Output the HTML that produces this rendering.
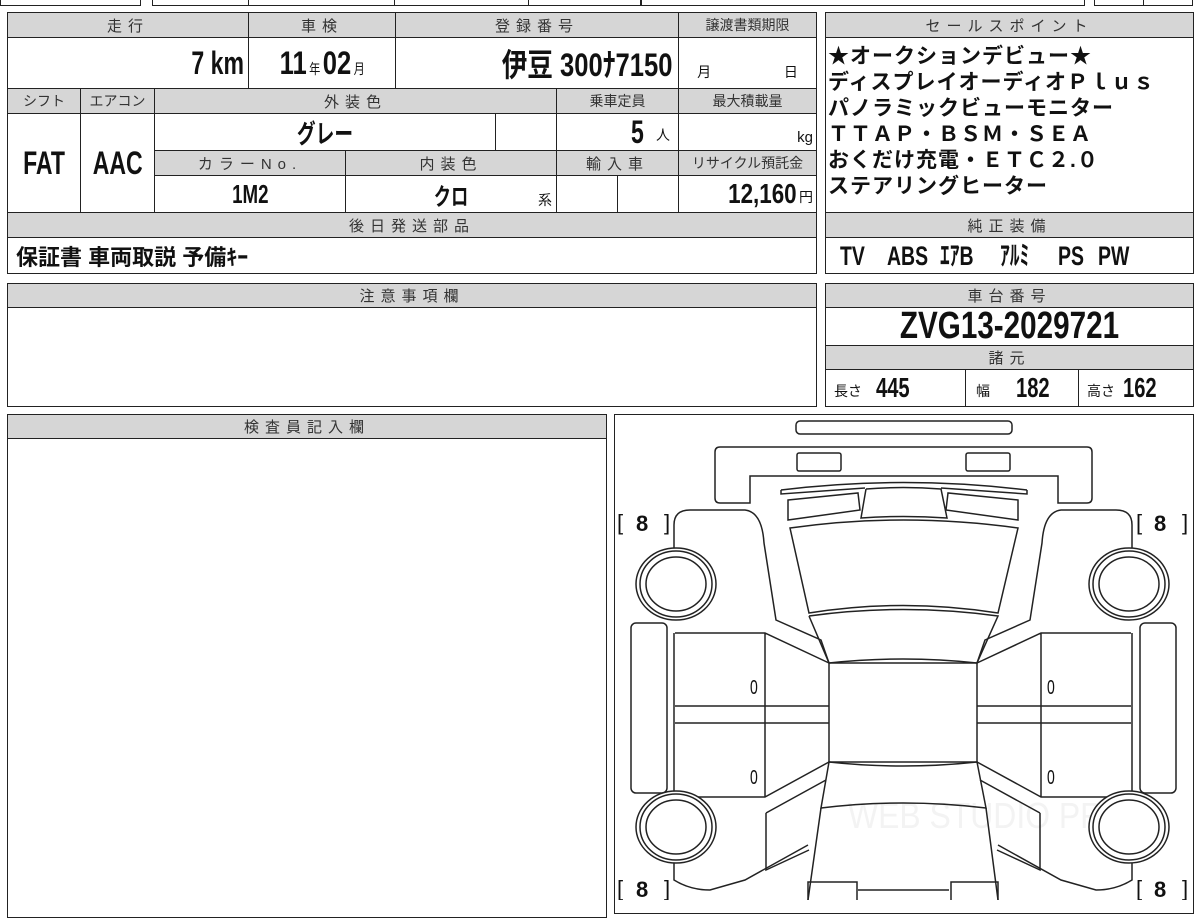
<!DOCTYPE html>
<html><head><meta charset="utf-8"><style>
*{margin:0;padding:0;box-sizing:border-box}
body{width:1200px;height:900px;background:#fff;position:relative;overflow:hidden;font-family:"Liberation Sans","Noto Sans CJK JP",sans-serif;color:#111}
.c{position:absolute;border:1.5px solid #222;display:flex;align-items:center;justify-content:center;white-space:nowrap;overflow:hidden}
.h{background:#d6d6d6;font-size:15px;color:#333;letter-spacing:6px}
.hs{letter-spacing:0;font-size:14px}
.b{font-weight:bold;font-size:32px;color:#111}
.n{display:inline-block;transform:scaleX(.72)}
.r{transform-origin:right center}
.l{transform-origin:left center}
.sm{font-size:14px;font-weight:normal}
.t{position:absolute;white-space:nowrap}
</style></head><body>
<!-- top partial -->
<div style="position:absolute;left:0;top:-10px;width:141px;height:16px;border:1.5px solid #222"></div>
<div style="position:absolute;left:152px;top:-10px;width:489px;height:16px;border:1.5px solid #222"></div>
<div style="position:absolute;left:248px;top:-10px;width:147px;height:16px;border-left:1.5px solid #222;border-right:1.5px solid #222"></div>
<div style="position:absolute;left:528px;top:-10px;width:1px;height:16px;border-left:1.5px solid #222"></div>
<div style="position:absolute;left:641px;top:-10px;width:444px;height:16px;border:1.5px solid #222"></div>
<div style="position:absolute;left:1094px;top:-10px;width:99px;height:16px;border:1.5px solid #222"></div>
<div style="position:absolute;left:1143px;top:-10px;width:1px;height:16px;border-left:1.5px solid #222"></div>

<!-- main left table -->
<div class="c h" style="left:7px;top:12px;width:242px;height:26px">走行</div>
<div class="c h" style="left:248px;top:12px;width:148px;height:26px">車検</div>
<div class="c h" style="left:395px;top:12px;width:284px;height:26px">登録番号</div>
<div class="c h hs" style="left:678px;top:12px;width:139px;height:26px">譲渡書類期限</div>

<div class="c b" style="left:7px;top:37px;width:242px;height:52px;justify-content:flex-end;padding-right:4px"><span class="n r">7 km</span></div>
<div class="c b" style="left:248px;top:37px;width:148px;height:52px"><span class="n" style="transform:scaleX(.8)">11<span class="sm" style="margin:0 3px">年</span>02<span class="sm" style="margin-left:3px">月</span></span></div>
<div class="c b" style="left:395px;top:37px;width:284px;height:52px;justify-content:flex-end;padding-right:6px"><span class="n r" style="transform:scaleX(.8)">伊豆 300ﾅ7150</span></div>
<div class="c" style="left:678px;top:37px;width:139px;height:52px;font-size:14px;align-items:flex-end;padding-bottom:6px;justify-content:space-around">月<span></span>日</div>

<div class="c h hs" style="left:7px;top:88px;width:74px;height:26px">シフト</div>
<div class="c h hs" style="left:80px;top:88px;width:75px;height:26px">エアコン</div>
<div class="c h" style="left:154px;top:88px;width:403px;height:26px">外装色</div>
<div class="c h hs" style="left:556px;top:88px;width:123px;height:26px">乗車定員</div>
<div class="c h hs" style="left:678px;top:88px;width:139px;height:26px">最大積載量</div>

<div class="c b" style="left:7px;top:113px;width:74px;height:100px"><span class="n">FAT</span></div>
<div class="c b" style="left:80px;top:113px;width:75px;height:100px"><span class="n">AAC</span></div>
<div class="c b" style="left:154px;top:113px;width:342px;height:38px;font-size:26px"><span class="n">グレー</span></div>
<div class="c" style="left:495px;top:113px;width:62px;height:38px"></div>
<div class="c b" style="left:556px;top:113px;width:123px;height:38px;justify-content:flex-end;padding-right:8px"><span class="n r">5</span><span class="sm" style="margin:6px 0 0 12px">人</span></div>
<div class="c" style="left:678px;top:113px;width:139px;height:38px;justify-content:flex-end;padding-right:3px;font-size:15px;align-items:flex-end;padding-bottom:4px">kg</div>

<div class="c h" style="left:154px;top:150px;width:192px;height:26px">カラーNo.</div>
<div class="c h" style="left:345px;top:150px;width:212px;height:26px">内装色</div>
<div class="c h" style="left:556px;top:150px;width:123px;height:26px">輸入車</div>
<div class="c h hs" style="left:678px;top:150px;width:139px;height:26px">リサイクル預託金</div>

<div class="c b" style="left:154px;top:175px;width:192px;height:38px;font-size:26px"><span class="n">1M2</span></div>
<div class="c b" style="left:345px;top:175px;width:212px;height:38px;font-size:24px"><span class="n">クロ</span><span class="sm" style="position:absolute;right:4px;top:14px">系</span></div>
<div class="c" style="left:556px;top:175px;width:62px;height:38px"></div>
<div class="c" style="left:617px;top:175px;width:62px;height:38px"></div>
<div class="c b" style="left:678px;top:175px;width:139px;height:38px;font-size:28px;justify-content:flex-end;padding-right:3px"><span class="n r" style="transform:scaleX(.8)">12,160</span><span class="sm" style="margin:6px 0 0 2px">円</span></div>

<div class="c h" style="left:7px;top:212px;width:810px;height:26px">後日発送部品</div>
<div class="c" style="left:7px;top:237px;width:810px;height:37px;justify-content:flex-start;padding-left:8px;font-size:22px;font-weight:bold">保証書 車両取説 予備ｷｰ</div>

<!-- 注意事項欄 -->
<div class="c h" style="left:7px;top:283px;width:810px;height:25px">注意事項欄</div>
<div class="c" style="left:7px;top:307px;width:810px;height:100px"></div>

<!-- 検査員記入欄 -->
<div class="c h" style="left:7px;top:414px;width:600px;height:25px">検査員記入欄</div>
<div class="c" style="left:7px;top:438px;width:600px;height:480px"></div>

<!-- right column -->
<div class="c h" style="left:825px;top:12px;width:369px;height:26px">セールスポイント</div>
<div class="c" style="left:825px;top:37px;width:369px;height:176px;display:block;padding:6px 0 0 2px;font-size:21px;font-weight:bold;line-height:26px;letter-spacing:1px">
★オークションデビュー★<br>ディスプレイオーディオＰｌｕｓ<br>パノラミックビューモニター<br>ＴＴＡＰ・ＢＳＭ・ＳＥＡ<br>おくだけ充電・ＥＴＣ２.０<br>ステアリングヒーター</div>
<div class="c h" style="left:825px;top:212px;width:369px;height:26px">純正装備</div>
<div class="c" style="left:825px;top:237px;width:369px;height:37px"></div>
<div style="position:absolute;left:0;top:238px;font-weight:bold;font-size:27px;line-height:36px">
<span class="t n l" style="left:840px">TV</span>
<span class="t n l" style="left:887px">ABS</span>
<span class="t n l" style="left:940px">ｴｱB</span>
<span class="t n l" style="left:1000px">ｱﾙﾐ</span>
<span class="t n l" style="left:1058px">PS</span>
<span class="t n l" style="left:1098px">PW</span>
</div>

<div class="c h" style="left:825px;top:283px;width:369px;height:25px">車台番号</div>
<div class="c b" style="left:825px;top:307px;width:369px;height:39px;font-size:38px"><span class="n" style="transform:scaleX(.78)">ZVG13-2029721</span></div>
<div class="c h" style="left:825px;top:345px;width:369px;height:25px">諸元</div>
<div class="c b" style="left:825px;top:369px;width:141px;height:38px;justify-content:flex-start;padding-left:8px;font-size:28px"><span class="sm" style="margin:6px 14px 0 0">長さ</span><span class="n l">445</span></div>
<div class="c b" style="left:965px;top:369px;width:114px;height:38px;justify-content:flex-start;padding-left:10px;font-size:28px"><span class="sm" style="margin:6px 26px 0 0">幅</span><span class="n l">182</span></div>
<div class="c b" style="left:1078px;top:369px;width:116px;height:38px;justify-content:flex-start;padding-left:8px;font-size:28px"><span class="sm" style="margin:6px 8px 0 0">高さ</span><span class="n l">162</span></div>

<!-- diagram -->
<div class="c" style="left:614px;top:414px;width:580px;height:500px"></div>
<svg style="position:absolute;left:0;top:0" width="1200" height="900" fill="none" stroke="#222" stroke-width="1.5">
<text x="848" y="828" fill="#f3f3f3" stroke="none" font-family="Liberation Sans, sans-serif" font-size="36" textLength="280" lengthAdjust="spacingAndGlyphs">WEB STUDIO PRO</text>
<rect x="796" y="421" width="216" height="13" rx="4"/>
<path d="M750,503 L720,503 Q715,503 715,498 L715,452 Q715,447 720,447 L1087,447 Q1092,447 1092,452 L1092,498 Q1092,503 1087,503 L1058,503 L1058,476 L750,476 Z"/>
<rect x="797" y="453" width="44" height="18" rx="2"/>
<rect x="966" y="453" width="44" height="18" rx="2"/>
<path d="M781,490 Q903,475 1027,490"/>
<path d="M781,490 L781,494 L865,488"/>
<path d="M1027,490 L1027,494 L941,488"/>
<path d="M788,500 L858,493 L860,510 L788,520 Z"/>
<path d="M1018,500 L948,493 L946,510 L1018,520 Z"/>
<path d="M866,489 L861,518 Q903,515 947,518 L941,489 Q903,486 866,489"/>
<path d="M790,528 Q903,512 1018,528 L998,613 Q903,598 809,613 Z"/>
<path d="M809,616 L829,663 Q903,655 977,663 L998,616 Q903,603 809,616"/>
<rect x="829" y="663" width="148" height="99"/>
<path d="M829,762 Q903,770 977,762 L986,808 Q903,798 821,808 Z"/>
<path d="M821,808 L808,900 M986,808 L998,900"/>
<path d="M674,548 L674,525 Q674,510 690,510 L745,510 Q762,512 764,543 L776,620 L821,640 L829,663"/>
<path d="M674,633 L674,797 M674,860 L674,880 Q690,890 710,890 L745,880 L808,845"/>
<path d="M675,633 L765,633 L829,663 M765,633 L765,797 M675,797 L765,797 L829,762 M675,706 L829,706 M675,723 L829,723"/>
<path d="M766,813 L766,870 L809,850 M766,813 L826,780"/>
<rect x="631" y="623" width="36" height="170" rx="5"/>
<path d="M1132,548 L1132,525 Q1132,510 1116,510 L1061,510 Q1044,512 1042,543 L1030,620 L985,640 L977,663"/>
<path d="M1132,633 L1132,797 M1132,860 L1132,880 Q1116,890 1096,890 L1061,880 L998,845"/>
<path d="M1131,633 L1041,633 L977,663 M1041,633 L1041,797 M1131,797 L1041,797 L977,762 M1131,706 L977,706 M1131,723 L977,723"/>
<path d="M1040,813 L1040,870 L997,850 M1040,813 L980,780"/>
<rect x="1140" y="623" width="36" height="170" rx="5"/>
<g fill="#fff">
<ellipse cx="676" cy="584" rx="40" ry="36"/><ellipse cx="676" cy="584" rx="36" ry="33"/><ellipse cx="676" cy="584" rx="30" ry="27"/>
<ellipse cx="676" cy="827" rx="40" ry="36"/><ellipse cx="676" cy="827" rx="36" ry="33"/><ellipse cx="676" cy="827" rx="30" ry="27"/>
<ellipse cx="1129" cy="584" rx="40" ry="36"/><ellipse cx="1129" cy="584" rx="36" ry="33"/><ellipse cx="1129" cy="584" rx="30" ry="27"/>
<ellipse cx="1129" cy="827" rx="40" ry="36"/><ellipse cx="1129" cy="827" rx="36" ry="33"/><ellipse cx="1129" cy="827" rx="30" ry="27"/>
</g>
<path d="M808,900 L808,882 L857,882 L857,900 M858,890 L949,890 M951,900 L951,882 L998,882 L998,900"/>
<g fill="#111" stroke="none" font-family="Liberation Sans, sans-serif" font-size="20">
<text x="750" y="694" transform="translate(750,0) scale(.7,1) translate(-750,0)">0</text><text x="750" y="784" transform="translate(750,0) scale(.7,1) translate(-750,0)">0</text>
<text x="1047" y="694" transform="translate(1047,0) scale(.7,1) translate(-1047,0)">0</text><text x="1047" y="784" transform="translate(1047,0) scale(.7,1) translate(-1047,0)">0</text>
</g>
<g fill="#111" stroke="none" font-family="Liberation Sans, sans-serif" font-size="22">
<text x="617" y="530">[</text><text x="636" y="531" font-weight="bold">8</text><text x="664" y="530">]</text>
<text x="1136" y="530">[</text><text x="1154" y="531" font-weight="bold">8</text><text x="1182" y="530">]</text>
<text x="617" y="896">[</text><text x="636" y="897" font-weight="bold">8</text><text x="664" y="896">]</text>
<text x="1136" y="896">[</text><text x="1154" y="897" font-weight="bold">8</text><text x="1182" y="896">]</text>
</g>
</svg>
</body></html>
